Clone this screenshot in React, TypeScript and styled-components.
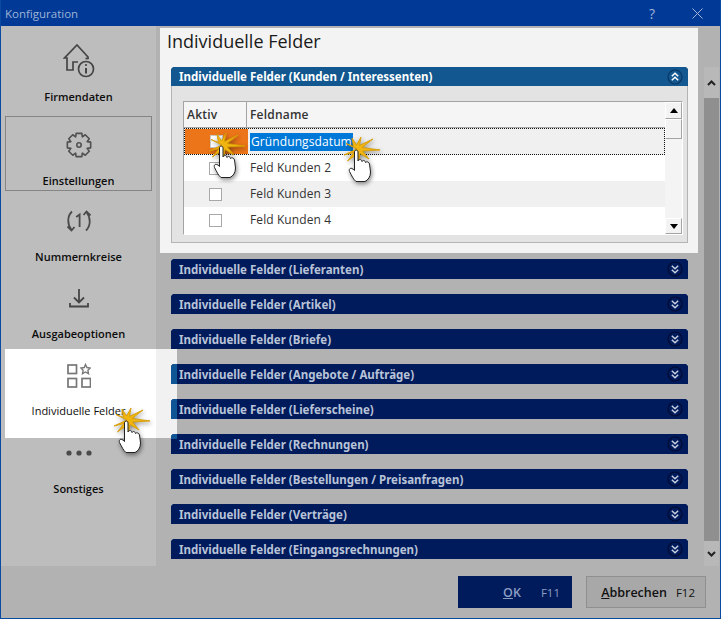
import * as React from 'react'
import styled, { createGlobalStyle } from 'styled-components'

const sections = [
  { label: 'Lieferanten', lit: 0 },
  { label: 'Artikel', lit: 0 },
  { label: 'Briefe', lit: 0 },
  { label: 'Angebote / Aufträge', lit: 20 },
  { label: 'Lieferscheine', lit: 20 },
  { label: 'Rechnungen', lit: 5 },
  { label: 'Bestellungen / Preisanfragen', lit: 0 },
  { label: 'Verträge', lit: 0 },
  { label: 'Eingangsrechnungen', lit: 0 },
]

const rows = ['Gründungsdatum', 'Feld Kunden 2', 'Feld Kunden 3', 'Feld Kunden 4']

const gearPath = () => {
  const points: string[] = []
  for (let i = 0; i < 8; i++) {
    const a = (i * Math.PI) / 4 - Math.PI / 2
    const step = [
      [-0.39, 8.8],
      [-0.24, 12],
      [0.24, 12],
      [0.39, 8.8],
    ]
    step.forEach(([da, r]) => {
      points.push(`${(13 + r * Math.cos(a + da)).toFixed(2)} ${(13 + r * Math.sin(a + da)).toFixed(2)}`)
    })
  }
  return `M${points.join('L')}Z`
}

const HouseIcon = () => (
  <svg width="32" height="34" viewBox="0 0 32 34" fill="none" stroke="#454545" strokeWidth="1.7">
    <path d="M25 15V13L14 1 1.5 14H4V26H10V18H15" />
    <path d="M22.5 14.5h3" />
    <circle cx="23" cy="25" r="7.5" />
    <path d="M23 24v5.5" strokeWidth="2" />
    <circle cx="23" cy="21" r="1.1" fill="#454545" stroke="none" />
  </svg>
)

const GearIcon = () => (
  <svg width="26" height="26" viewBox="0 0 26 26" fill="none" stroke="#505050" strokeWidth="1.6">
    <path d={gearPath()} strokeLinejoin="round" />
    <circle cx="13" cy="13" r="2.2" />
  </svg>
)

const CycleIcon = () => (
  <svg width="26" height="24" viewBox="0 0 26 24" fill="none" stroke="#4a4a4a" strokeWidth="1.8">
    <path d="M6 2.5C1.2 7 1 15 5.5 21" />
    <path d="M1.5 17.5l4 4 3-3.5" />
    <path d="M20 21.5C24.8 17 25 9 20.5 3" />
    <path d="M24.5 6.5l-4-4-3 3.5" />
    <path d="M10.2 8l3.4-2.5V18" />
  </svg>
)

const DownloadIcon = () => (
  <svg width="20" height="20" viewBox="0 0 20 20" fill="none" stroke="#454545" strokeWidth="1.8">
    <path d="M10 1V14M5 9.5l5 5 5-5" />
    <path d="M1 15v3.5h18V15" />
  </svg>
)

const FieldsIcon = () => (
  <svg width="24" height="25" viewBox="0 0 24 25" fill="none" stroke="#777" strokeWidth="1.7">
    <rect x="1" y="2" width="8.5" height="8.5" />
    <rect x="1" y="15.5" width="8.5" height="8.5" />
    <rect x="15" y="15.5" width="8.5" height="8.5" />
    <path d="M18.5 1.5l1.5 3 3.3.5-2.4 2.3.6 3.3-3-1.6-3 1.6.6-3.3L14 5l3.3-.5z" strokeWidth="1.4" />
  </svg>
)

const DotsIcon = () => (
  <svg width="26" height="6" viewBox="0 0 26 6" fill="#4a4a4a">
    <circle cx="3" cy="3" r="2.6" />
    <circle cx="13" cy="3" r="2.6" />
    <circle cx="23" cy="3" r="2.6" />
  </svg>
)

const CloseIcon = () => (
  <svg width="11" height="11" viewBox="0 0 11 11" stroke="#9fb4d6" strokeWidth="1">
    <path d="M0.5 0.5L10.5 10.5M10.5 0.5L0.5 10.5" />
  </svg>
)

const ChevronCircle = ({ up, bright }: { up?: boolean, bright?: boolean }) => (
  <svg width="16" height="16" viewBox="0 0 16 16" fill="none">
    <circle cx="8" cy="8" r="7" stroke={bright ? '#0a3560' : '#000a30'} strokeWidth="1.2" />
    <path
      d={up ? 'M4.8 7.2L8 4.2l3.2 3M4.8 11.2L8 8.2l3.2 3' : 'M4.8 4.8L8 7.8l3.2-3M4.8 8.8L8 11.8l3.2-3'}
      stroke={bright ? '#ffffff' : '#c6cedf'}
      strokeWidth="1.5"
    />
  </svg>
)

const Triangle = ({ down }: { down?: boolean }) => (
  <svg width="8" height="5" viewBox="0 0 8 5" fill="#000">
    <path d={down ? 'M0 0H8L4 5Z' : 'M0 5H8L4 0Z'} />
  </svg>
)

const Caret = ({ down }: { down?: boolean }) => (
  <svg width="9" height="6" viewBox="0 0 9 6" fill="none" stroke="#222" strokeWidth="2">
    <path d={down ? 'M1 1l3.5 3.5L8 1' : 'M1 5l3.5-3.5L8 5'} />
  </svg>
)

const ClickCursor = ({ x, y }: { x: number, y: number }) => (
  <CursorLayer $x={x} $y={y}>
    <svg width="38" height="48" viewBox="0 0 38 48">
      <path
        d="M13 12L0 18 10 15.5 3.5 24 13 17 14.5 25 16 16.5 25 22 18.5 14 36 13 18 10.5 29 2 15.5 8.5 17 0 12.5 8 8 1 9.5 9.5 2 6.5z"
        fill="#f0b510"
        stroke="#d79c05"
        strokeWidth="0.9"
        strokeLinejoin="round"
      />
      <path
        d="M10.5 15C10.5 12.5 14 12.5 14 15V24C15 22 17.5 22 18 24.5 19 22.8 21 23.2 21.5 25.5 22.5 24.2 25 24.8 25.5 27L26.5 35C26.5 40 24 43 21 44.5H12C9 42 8 39 5.5 34.5 4.5 31.5 7 29.5 10.5 33.5Z"
        fill="#fff"
        stroke="#222"
        strokeWidth="1"
      />
    </svg>
  </CursorLayer>
)

const App: React.FC = () => (
  <StyledWindow>
    <GlobalStyle />
    <StyledTitleBar>
      <StyledTitle>Konfiguration</StyledTitle>
      <StyledHelp>?</StyledHelp>
      <CloseIcon />
    </StyledTitleBar>
    <StyledBody>
      <StyledSidebar>
        <StyledNavItem $after={7}>
          <StyledNavIcon><HouseIcon /></StyledNavIcon>
          <StyledNavLabel>Firmendaten</StyledNavLabel>
        </StyledNavItem>
        <StyledNavItem $boxed $after={-1}>
          <StyledNavIcon><GearIcon /></StyledNavIcon>
          <StyledNavLabel>Einstellungen</StyledNavLabel>
        </StyledNavItem>
        <StyledNavItem>
          <StyledNavIcon><CycleIcon /></StyledNavIcon>
          <StyledNavLabel>Nummernkreise</StyledNavLabel>
        </StyledNavItem>
        <StyledNavItem>
          <StyledNavIcon><DownloadIcon /></StyledNavIcon>
          <StyledNavLabel>Ausgabeoptionen</StyledNavLabel>
        </StyledNavItem>
        <StyledNavItem $lit $after={1}>
          <StyledNavIcon><FieldsIcon /></StyledNavIcon>
          <StyledNavLabel $lit>Individuelle Felder</StyledNavLabel>
        </StyledNavItem>
        <StyledNavItem>
          <StyledNavIcon><DotsIcon /></StyledNavIcon>
          <StyledNavLabel>Sonstiges</StyledNavLabel>
        </StyledNavItem>
      </StyledSidebar>
      <StyledContent>
        <StyledPages>
          <StyledOpenPanel>
            <StyledPageTitle>Individuelle Felder</StyledPageTitle>
            <StyledSectionHeader $open>
              <span>Individuelle Felder (Kunden / Interessenten)</span>
              <ChevronCircle up bright />
            </StyledSectionHeader>
            <StyledSectionBody>
              <StyledGrid>
                <StyledGridMain>
                  <StyledGridHead>
                    <StyledAktivHead>Aktiv</StyledAktivHead>
                    <StyledNameHead>Feldname</StyledNameHead>
                  </StyledGridHead>
                  {rows.map((name, i) => (
                    <StyledRow key={name} $striped={i % 2 === 0} $current={i === 0}>
                      <StyledCheckCell $current={i === 0}>
                        <StyledCheck $current={i === 0} />
                      </StyledCheckCell>
                      <StyledNameCell>
                        <StyledNameText $current={i === 0}>{name}</StyledNameText>
                      </StyledNameCell>
                    </StyledRow>
                  ))}
                </StyledGridMain>
                <StyledGridScroll>
                  <StyledGridButton $h={17}><Triangle /></StyledGridButton>
                  <StyledGridButton $h={20} />
                  <StyledGridTrack />
                  <StyledGridButton $h={16}><Triangle down /></StyledGridButton>
                </StyledGridScroll>
              </StyledGrid>
            </StyledSectionBody>
          </StyledOpenPanel>
          <StyledSectionList>
            {sections.map(section => (
              <StyledSectionHeader key={section.label} $lit={section.lit}>
                <span>Individuelle Felder ({section.label})</span>
                <ChevronCircle />
              </StyledSectionHeader>
            ))}
          </StyledSectionList>
        </StyledPages>
        <StyledPageScroll>
          <StyledScrollEnd $h={31}><Caret /></StyledScrollEnd>
          <StyledScrollThumb />
          <StyledScrollEnd $h={25}><Caret down /></StyledScrollEnd>
        </StyledPageScroll>
      </StyledContent>
    </StyledBody>
    <StyledFooter>
      <StyledOkButton>
        <span><u>O</u>K</span>
        <StyledKey>F11</StyledKey>
      </StyledOkButton>
      <StyledCancelButton>
        <span><u>A</u>bbrechen</span>
        <StyledKey>F12</StyledKey>
      </StyledCancelButton>
    </StyledFooter>
    <ClickCursor x={208} y={133} />
    <ClickCursor x={343} y={137} />
    <ClickCursor x={113} y={408} />
  </StyledWindow>
)

const GlobalStyle = createGlobalStyle`
  html, body {
    margin: 0;
    padding: 0;
    background: #b2b2b2;
  }
  * {
    box-sizing: border-box;
  }
`

const StyledWindow = styled.div`
  position: relative;
  width: 721px;
  height: 619px;
  display: flex;
  flex-direction: column;
  overflow: hidden;
  background: #b2b2b2;
  border: 1px solid #0a4aa0;
  border-top: 0;
  font-family: "Open Sans", "Liberation Sans", sans-serif;
`

const StyledTitleBar = styled.div`
  flex: 0 0 26px;
  display: flex;
  align-items: center;
  margin: 0 -1px;
  padding: 0 18px 0 5px;
  background: #003996;
  color: #9fb4d6;
`

const StyledTitle = styled.div`
  flex: 1 1 auto;
  font-size: 11.5px;
`

const StyledHelp = styled.div`
  margin-right: 37px;
  font-size: 14px;
`

const StyledBody = styled.div`
  flex: 0 0 540px;
  display: flex;
`

const StyledSidebar = styled.div`
  position: relative;
  flex: 0 0 155px;
  display: flex;
  flex-direction: column;
  gap: 2px;
  padding: 6px 4px 0 4px;
  background: #bdbdbd;
`

const StyledNavItem = styled.div<{ $after?: number, $boxed?: boolean, $lit?: boolean }>`
  position: relative;
  flex: 0 0 75px;
  display: flex;
  flex-direction: column;
  align-items: center;
  padding-top: 8px;
  margin-bottom: ${props => props.$after || 0}px;
  border: ${props => (props.$boxed ? '1px solid #858585' : '1px solid transparent')};

  ${props => props.$lit && `
    &::before {
      content: '';
      position: absolute;
      z-index: 1;
      left: -1px;
      top: 2px;
      width: 172px;
      height: 89px;
      background: linear-gradient(to right, #ffffff 151px, #f1f1f1 151px);
    }
  `}
`

const StyledNavIcon = styled.div`
  position: relative;
  z-index: 2;
  height: 40px;
  display: flex;
  align-items: center;
  justify-content: center;
`

const StyledNavLabel = styled.div<{ $lit?: boolean }>`
  position: relative;
  z-index: 2;
  margin-top: 8px;
  line-height: 16px;
  font-size: 11px;
  font-weight: ${props => (props.$lit ? 400 : 600)};
  color: #0c0c0c;
`

const StyledContent = styled.div`
  flex: 1 1 auto;
  display: flex;
  min-width: 0;
`

const StyledPages = styled.div`
  flex: 1 1 auto;
  padding: 2px 0 0 4px;
  min-width: 0;
`

const StyledOpenPanel = styled.div`
  width: 538px;
  height: 225px;
  padding: 0 10px 0 11px;
  background: #f3f3f3;
`

const StyledPageTitle = styled.div`
  height: 39px;
  margin-left: -4px;
  padding-top: 1px;
  line-height: 25px;
  font-size: 18px;
  color: #1a1a1a;
`

const StyledSectionHeader = styled.div<{ $open?: boolean, $lit?: number }>`
  position: relative;
  z-index: 2;
  height: ${props => (props.$open ? '19px' : '20px')};
  display: flex;
  align-items: center;
  justify-content: space-between;
  padding: 0 5px 0 8px;
  background: ${props => (props.$open ? '#12578f' : '#001b5c')};
  color: ${props => (props.$open ? '#ffffff' : '#b9c3d8')};
  font-family: "Noto Sans", sans-serif;
  font-size: 11.5px;
  font-weight: 700;
  clip-path: polygon(2px 0, calc(100% - 2px) 0, 100% 2px, 100% 100%, 0 100%, 0 2px);

  ${props => props.$lit && `
    &::before {
      content: '';
      position: absolute;
      left: 0;
      top: 0;
      width: 6px;
      height: ${props.$lit}px;
      background: #0f5596;
    }
  `}
`

const StyledSectionBody = styled.div`
  height: 157px;
  padding: 15px 4px 7px 11px;
  background: #e3e3e3;
  border: 1px solid #b4b4b4;
  border-top: 0;
`

const StyledGrid = styled.div`
  height: 134px;
  display: flex;
  background: #ffffff;
  border: 1px solid #a4a4a4;
  border-right-color: #ffffff;
  border-bottom-color: #ffffff;
  overflow: hidden;
`

const StyledGridMain = styled.div`
  flex: 1 1 auto;
  min-width: 0;
`

const StyledGridHead = styled.div`
  height: 26px;
  display: flex;
  background: #f5f5f5;
  border-bottom: 1px solid #a4a4a4;
  line-height: 26px;
  font-size: 12px;
  font-weight: 600;
  letter-spacing: 0.2px;
  color: #333;
`

const StyledAktivHead = styled.div`
  flex: 0 0 63px;
  padding-left: 3px;
  border-right: 1px solid #a4a4a4;
`

const StyledNameHead = styled.div`
  padding-left: 3px;
`

const StyledRow = styled.div<{ $striped: boolean, $current: boolean }>`
  height: ${props => (props.$current ? '27px' : '26px')};
  display: flex;
  align-items: center;
  background: ${props => (props.$striped ? '#f0f0f0' : '#ffffff')};
  border: ${props => (props.$current ? '1px dotted #111' : '0')};
  font-size: 12px;
  color: #333;
`

const StyledCheckCell = styled.div<{ $current: boolean }>`
  flex: 0 0 63px;
  height: 100%;
  display: flex;
  align-items: center;
  justify-content: center;
  background: ${props => (props.$current ? '#ec7419' : 'transparent')};
`

const StyledCheck = styled.div<{ $current: boolean }>`
  width: 13px;
  height: 13px;
  background: #ffffff;
  border: 1px solid ${props => (props.$current ? '#c8c8c8' : '#a8a8a8')};
`

const StyledNameCell = styled.div`
  flex: 1 1 auto;
  padding-left: 2px;
`

const StyledNameText = styled.span<{ $current: boolean }>`
  display: inline-block;
  line-height: 18px;
  padding: 0 1px;
  letter-spacing: 0.1px;
  background: ${props => (props.$current ? '#0078d7' : 'transparent')};
  color: ${props => (props.$current ? '#ffffff' : '#333')};
`

const StyledGridScroll = styled.div`
  flex: 0 0 17px;
  display: flex;
  flex-direction: column;
  background: #f2f2f2;
`

const StyledGridButton = styled.div<{ $h: number }>`
  flex: 0 0 ${props => props.$h}px;
  display: flex;
  align-items: center;
  justify-content: center;
  background: #f3f3f3;
  border: 1px solid #ffffff;
  border-right-color: #a4a4a4;
  border-bottom-color: #a4a4a4;
`

const StyledGridTrack = styled.div`
  flex: 1 1 auto;
  background: #f4f4f4;
`

const StyledSectionList = styled.div`
  width: 517px;
  margin: 6px 0 0 11px;
  display: flex;
  flex-direction: column;
  gap: 15px;
`

const StyledPageScroll = styled.div`
  flex: 0 0 15px;
  margin: 41px 1px 0 0;
  display: flex;
  flex-direction: column;
  background: #b8b8b8;
`

const StyledScrollEnd = styled.div<{ $h: number }>`
  flex: 0 0 ${props => props.$h}px;
  display: flex;
  align-items: center;
  justify-content: center;
`

const StyledScrollThumb = styled.div`
  flex: 1 1 auto;
  background: #8f8f8f;
`

const StyledFooter = styled.div`
  flex: 1 1 auto;
  display: flex;
  justify-content: flex-end;
  gap: 14px;
  padding: 10px 14px 0 0;
`

const StyledOkButton = styled.div`
  width: 114px;
  height: 32px;
  display: flex;
  align-items: center;
  justify-content: flex-end;
  gap: 20px;
  padding-right: 12px;
  background: #001b5c;
  color: #8b9dc2;
  font-size: 12.5px;
  font-weight: 600;
`

const StyledCancelButton = styled.div`
  width: 120px;
  height: 32px;
  display: flex;
  align-items: center;
  justify-content: flex-end;
  gap: 9px;
  padding-right: 10px;
  background: #a8a8a8;
  border: 1px solid #8f8f8f;
  color: #111;
  font-size: 12.5px;
  font-weight: 600;
`

const StyledKey = styled.span`
  font-size: 11.5px;
  font-weight: 400;
`

const CursorLayer = styled.div<{ $x: number, $y: number }>`
  position: absolute;
  z-index: 5;
  left: ${props => props.$x}px;
  top: ${props => props.$y}px;
  line-height: 0;
  filter: drop-shadow(1px 2px 2px rgba(0, 0, 0, 0.45));
`

export default App
